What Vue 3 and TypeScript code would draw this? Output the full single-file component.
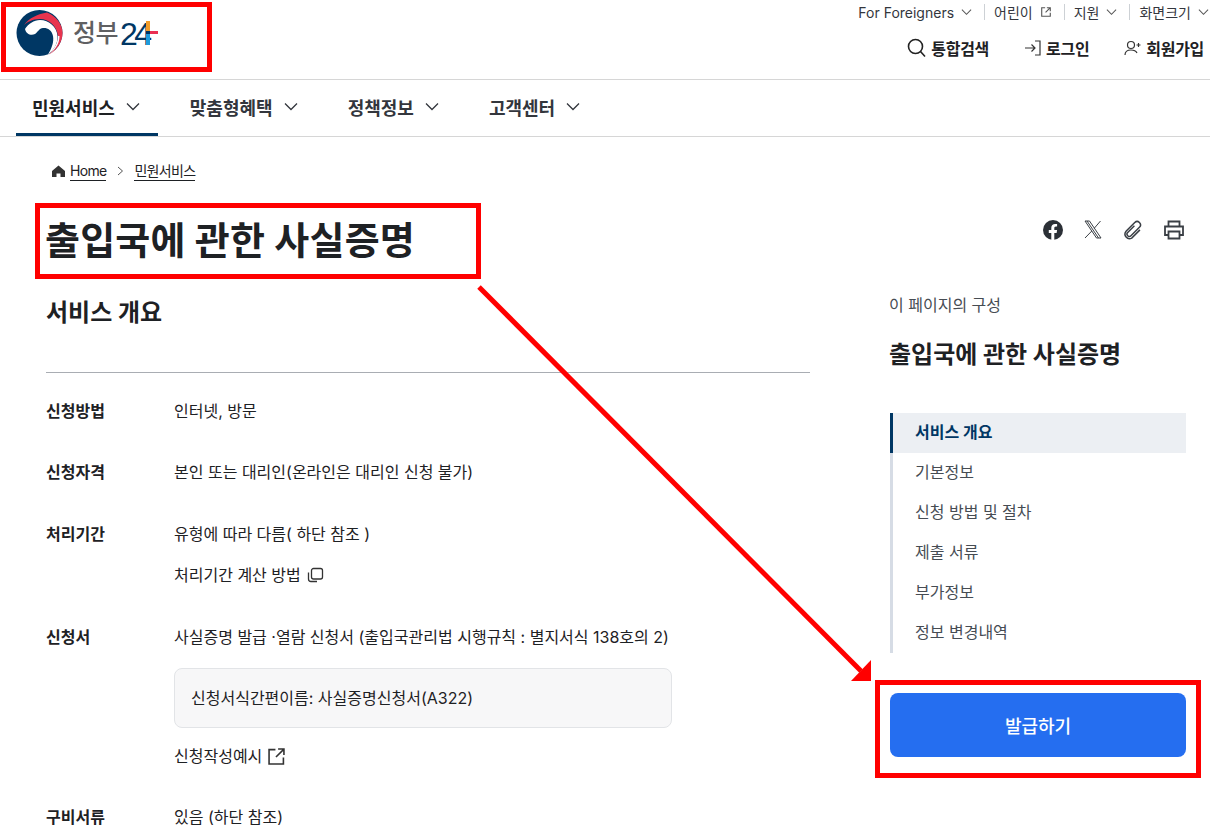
<script setup lang="ts">
const toc: string[] = ['서비스 개요', '기본정보', '신청 방법 및 절차', '제출 서류', '부가정보', '정보 변경내역']
const menus: string[] = ['민원서비스', '맞춤형혜택', '정책정보', '고객센터']
</script>

<template>
  <div class="page">
    <header class="top">
      <a class="logo">
        <svg width="48" height="46" viewBox="0 0 48 46">
          <circle cx="23.500" cy="23" r="23" fill="#003764" />
          <path d="M9 19C12 14 18 10 24 10C33 10 41 17 41.500 26C42 33 38 40 32 44.500C36 38 38 32 37 26C36 20 31 17.500 27 18C23 18.500 22 22 19 24C15 26 10 24 9 19Z" fill="#fff" />
          <path d="M8 15C13 8 22 4 31 2.500C40 6 46.500 14 46.500 23C46.500 32 41 40 33 44.500C39 39 42.500 32 42 26C41 16 33 9 24 9C17 9 11 12 8 15Z" fill="#e8344e" />
          <path d="M33 44.500C38 39 42 33 42 26L43.500 26C43.500 34 39 40 33 44.500Z" fill="#fff" />
        </svg>
        <span class="logo-word">정부</span>
        <span class="logo-num">24<svg class="plus" width="12" height="24" viewBox="0 0 12 24"><rect x="0" width="4" height="12" fill="#f39c27" /><rect x="0" y="12" width="4" height="12" fill="#1e9bdc" /><rect x="0" y="10" width="12" height="3" fill="#ea2f52" /><rect x="0" y="10" width="4" height="3" fill="#003764" /></svg></span>
      </a>
      <div class="util">
        <ul class="util-top">
          <li>For Foreigners
            <svg class="chev-s" viewBox="0 0 12 8"><path d="M1 1.500l5 5 5-5" /></svg>
          </li>
          <li>어린이
            <svg class="ext-s" viewBox="0 0 14 14"><path d="M6 2H2v10h10V8M8 2h4v4M12 2L6.500 7.500" /></svg>
          </li>
          <li>지원
            <svg class="chev-s" viewBox="0 0 12 8"><path d="M1 1.500l5 5 5-5" /></svg>
          </li>
          <li>화면크기
            <svg class="chev-s" viewBox="0 0 12 8"><path d="M1 1.500l5 5 5-5" /></svg>
          </li>
        </ul>
        <div class="util-main">
          <span class="act">
            <svg width="19" height="20" viewBox="0 0 19 20" fill="none" stroke="#222" stroke-width="1.600"><circle cx="8.500" cy="8.500" r="7" /><path d="M13.500 13.500L18 18.500" /></svg>
            통합검색
          </span>
          <span class="act">
            <svg width="17" height="16" viewBox="0 0 17 16" fill="none" stroke="#333" stroke-width="1.200"><path d="M1 8h10M7.500 4.500L11 8l-3.500 3.500M11 1h5v14h-5" /></svg>
            로그인
          </span>
          <span class="act">
            <svg width="17" height="16" viewBox="0 0 17 16" fill="none" stroke="#333" stroke-width="1.200"><circle cx="7" cy="5" r="3.500" /><path d="M1 15c0-3.500 2.500-5 6-5s5 1 6 3M12.500 5h4M14.500 3v4" /></svg>
            회원가입
          </span>
        </div>
      </div>
    </header>

    <nav class="gnb">
      <a v-for="(m, i) in menus" :key="m" class="gnb-item" :class="{ on: i === 0 }">
        {{ m }}
        <svg class="chev-l" viewBox="0 0 14 9"><path d="M1 1.500l6 6 6-6" /></svg>
      </a>
    </nav>

    <div class="crumb">
      <svg width="13" height="12" viewBox="0 0 13 12"><path d="M6.500 0.500L13 6v6H8.500V8.500h-4V12H0V6z" fill="#333" /></svg>
      <a>Home</a>
      <svg class="crumb-sep" width="7" height="10" viewBox="0 0 7 10"><path d="M1 1l4.500 4L1 9" fill="none" stroke="#555" /></svg>
      <a>민원서비스</a>
    </div>

    <div class="title-row">
      <h1>출입국에 관한 사실증명</h1>
      <div class="share">
        <svg width="20" height="20" viewBox="0 0 20 20"><circle cx="10" cy="10" r="10" fill="#2b3036" /><path d="M8.300 20v-7H5.800v-3h2.500V7.800c0-2.500 1.500-3.900 3.800-3.900 1 0 2 .2 2 .2v2.500h-1.200c-1.200 0-1.600.8-1.600 1.500V10h2.800l-.5 3h-2.300v7z" fill="#fff" /></svg>
        <svg width="18" height="19" viewBox="0 0 18 19" fill="none" stroke="#3a3f45" stroke-width="1"><path d="M1 1h4.500l11.500 17h-4.500zM16.500 1L10.300 8.200M7.800 11L1 18" /><path d="M3 1l11.500 17" /></svg>
        <svg width="20" height="20" viewBox="0 0 20 20" fill="none" stroke="#3a3f45" stroke-width="1.500"><g transform="rotate(45 10 10)"><path d="M8 6v9.500a2.300 2.300 0 0 0 4.600 0V3.500a3.300 3.300 0 0 0-6.600 0V15.800a4.500 4.500 0 0 0 8.800 .8V5" /></g></svg>
        <svg width="20" height="20" viewBox="0 0 20 20" fill="none" stroke="#3a3f45" stroke-width="1.800"><path d="M4.500 6V1.500h11V6M4.500 15H1V6.500h18V15h-3.500M4.500 11.500h11v7h-11z" /></svg>
      </div>
    </div>

    <div class="body">
      <main class="content">
        <h2>서비스 개요</h2>
        <hr />
        <dl class="info">
          <div class="line l1"><dt>신청방법</dt><dd>인터넷, 방문</dd></div>
          <div class="line l2"><dt>신청자격</dt><dd>본인 또는 대리인(온라인은 대리인 신청 불가)</dd></div>
          <div class="line l3">
            <dt>처리기간</dt>
            <dd>
              <p>유형에 따라 다름( 하단 참조 )</p>
              <p class="link">처리기간 계산 방법
                <svg width="17" height="16" viewBox="0 0 17 16" fill="none" stroke="#333" stroke-width="1.300"><rect x="4.500" y="1.500" width="11" height="10.500" rx="2" /><path d="M1.500 5.500v6.500c0 1.500 1 2.500 2.500 2.500h6" /></svg>
              </p>
            </dd>
          </div>
          <div class="line l4">
            <dt>신청서</dt>
            <dd>
              <p>사실증명 발급 ·열람 신청서 (출입국관리법 시행규칙 : 별지서식 138호의 2)</p>
              <div class="note">신청서식간편이름: 사실증명신청서(A322)</div>
              <p class="link">신청작성예시
                <svg width="17" height="17" viewBox="0 0 16 16" fill="none" stroke="#333" stroke-width="1.500"><path d="M7 1.500H1v13.500h13.500V9M9.500 1h5.500v5.500M15 1L7.500 8.500" /></svg>
              </p>
            </dd>
          </div>
          <div class="line l5"><dt>구비서류</dt><dd>있음 (하단 참조)</dd></div>
        </dl>
      </main>

      <aside class="side">
        <p class="side-cap">이 페이지의 구성</p>
        <h3>출입국에 관한 사실증명</h3>
        <ul class="toc">
          <li v-for="(t, i) in toc" :key="t" :class="{ on: i === 0 }">{{ t }}</li>
        </ul>
        <button class="apply" type="button">발급하기</button>
      </aside>
    </div>

    <i class="mark m-logo"></i>
    <i class="mark m-title"></i>
    <i class="mark m-btn"></i>
    <svg class="arrow" width="1210" height="837" viewBox="0 0 1210 837">
      <path d="M479 287L861 671" stroke="#f00" stroke-width="5" fill="none" />
      <path d="M871 660V681H851z" fill="#f00" />
    </svg>
  </div>
</template>

<style>
html, body { margin: 0; background: #fff; }
</style>

<style scoped>
.page {
  position: relative;
  width: 1210px;
  height: 837px;
  overflow: hidden;
  background: #fff;
  color: #1e2124;
  font-family: "Inter", "Noto Sans CJK KR", sans-serif;
}
ul, dl, dd, p, h1, h2, h3 { margin: 0; padding: 0; }
ul { list-style: none; }

.top {
  box-sizing: border-box;
  height: 80px;
  border-bottom: 1px solid #d6d6d6;
  display: flex;
  justify-content: space-between;
  padding: 0 6px 0 16px;
}
.logo { display: flex; align-items: flex-start; padding-top: 10px; height: 46px; }
.logo-word { margin: 2px 0 0 9px; font-size: 25px; font-weight: 500; line-height: 42px; color: #5f6062; letter-spacing: -0.5px; }
.logo-num {
  position: relative;
  display: block;
  width: 38px;
  margin: 3px 0 0 2px;
  font-family: "Liberation Sans", sans-serif;
  font-size: 32px;
  line-height: 42px;
  color: #003764;
  letter-spacing: -3.500px;
}
.plus { position: absolute; left: 26px; top: 8px; }

.util { display: flex; flex-direction: column; align-items: flex-end; }
.util-top { display: flex; height: 24px; margin-right: -5px; align-items: center; font-size: 14px; color: #33363d; }
.util-top li { display: flex; align-items: center; gap: 7px; padding: 0 12px 0 10px; position: relative; white-space: nowrap; }
.util-top li:last-child { padding-right: 0; }
.util-top li + li::before { content: ""; position: absolute; left: 0; top: 2px; height: 16px; width: 1px; background: #cdd1d5; }
.chev-s { width: 11px; height: 8px; fill: none; stroke: #555; stroke-width: 1.100; }
.ext-s { width: 12px; height: 12px; fill: none; stroke: #555; stroke-width: 1.300; }
.util-main { display: flex; gap: 35px; height: 48px; align-items: center; font-size: 16px; font-weight: 700; letter-spacing: -0.3px; color: #1e2124; }
.act { display: flex; align-items: center; gap: 5px; white-space: nowrap; }

.gnb {
  box-sizing: border-box;
  height: 57px;
  border-bottom: 1px solid #d6d6d6;
  display: flex;
  gap: 16px;
  padding-left: 16px;
}
.gnb-item {
  box-sizing: border-box;
  height: 56px;
  display: flex;
  align-items: center;
  gap: 11px;
  padding: 0 18px 0 16px;
  border-bottom: 3px solid transparent;
  font-size: 18px;
  font-weight: 700;
  color: #33363d;
  white-space: nowrap;
}
.gnb-item.on { color: #1e2124; border-bottom-color: #003764; }
.chev-l { width: 14px; height: 9px; fill: none; stroke: #33363d; stroke-width: 1.300; }

.crumb {
  display: flex;
  align-items: center;
  height: 20px;
  margin: 24px 0 0 52px;
  font-size: 14px;
  letter-spacing: -0.7px;
  color: #1e2124;
}
.crumb a { border-bottom: 1px solid #1e2124; line-height: 18px; margin-left: 5px; }
.crumb-sep { margin: 0 10px 0 11px; }
.crumb-sep + a { margin-left: 0; }

.title-row {
  display: flex;
  justify-content: space-between;
  align-items: center;
  height: 63px;
  margin-top: 28px;
  padding: 0 26px 0 45px;
}
h1 { font-size: 38px; line-height: 63px; font-weight: 700; letter-spacing: 0.2px; color: #1e2124; }
.share { display: flex; gap: 21px; align-items: center; margin-top: -22px; }

.body { display: flex; padding: 0 24px 0 46px; justify-content: space-between; }
.content { width: 764px; }
h2 { font-size: 24px; line-height: 36px; font-weight: 700; margin-top: 23px; }
hr { border: 0; border-top: 1px solid #a9adb3; margin: 41px 0 0; }
.info { font-size: 16px; line-height: 24px; color: #1e2124; }
.line { display: flex; }
dt { width: 128px; flex: none; font-weight: 700; }
.line.l1 { margin-top: 26px; }
.line.l2 { margin-top: 37px; }
.line.l3 { margin-top: 38px; }
.line.l4 { margin-top: 38px; }
.line.l5 { margin-top: 37px; }
.link { display: flex; align-items: center; gap: 6px; margin-top: 17px; }
.note {
  box-sizing: border-box;
  width: 498px;
  height: 60px;
  margin-top: 19px;
  padding: 0 16px;
  display: flex;
  align-items: center;
  background: #f7f7f8;
  border: 1px solid #e2e4e7;
  border-radius: 8px;
}
.note + .link { margin-top: 16px; }

.side { width: 296px; }
.side-cap { font-size: 16px; line-height: 24px; color: #464c53; margin-top: 21px; margin-left: -1px; }
h3 { font-size: 24px; line-height: 32px; font-weight: 700; margin: 22px 0 0 -1px; }
.toc { margin-top: 42px; border-left: 3px solid #d6dce5; }
.toc li { height: 40px; line-height: 38px; padding-left: 22px; font-size: 16px; color: #464c53; }
.toc li.on { background: #eceff3; color: #003764; font-weight: 700; margin-left: -3px; border-left: 3px solid #003764; }
.apply {
  display: block;
  width: 296px;
  height: 64px;
  margin-top: 40px;
  border: 0;
  border-radius: 8px;
  background: #256ef0;
  color: #fff;
  font: 500 18px "Inter", "Noto Sans CJK KR", sans-serif;
}

.mark { position: absolute; box-sizing: border-box; border: 5px solid #f00; }
.m-logo { left: 1px; top: 2px; width: 211px; height: 70px; }
.m-title { left: 35px; top: 203px; width: 446px; height: 76px; }
.m-btn { left: 875px; top: 680px; width: 326px; height: 98px; }
.arrow { position: absolute; left: 0; top: 0; pointer-events: none; }
</style>
